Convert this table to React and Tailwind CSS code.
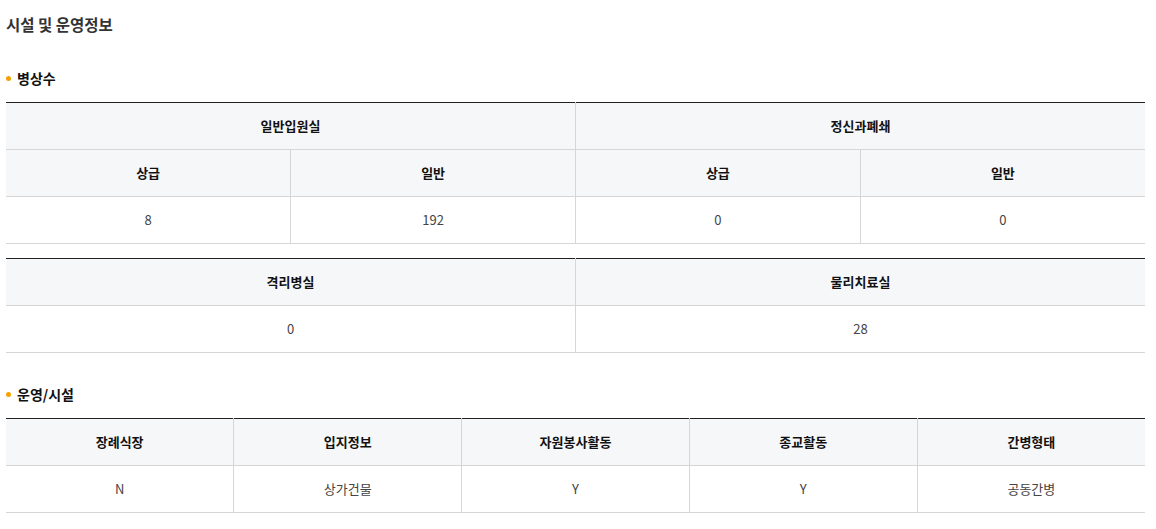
import React from "react";

const font = { fontFamily: '"Noto Sans CJK KR", "Noto Sans", sans-serif' };

function Th({ children, className = "", ...rest }) {
  return (
    <th
      {...rest}
      className={`h-[47px] bg-[#f6f7f9] border-b border-[#d6d6d6] border-l first:border-l-0 text-[13px] font-bold text-[#111] text-center align-middle p-0 ${className}`}
    >
      {children}
    </th>
  );
}

function Td({ children }) {
  return (
    <td className="h-[47px] border-b border-[#d6d6d6] border-l first:border-l-0 text-[13px] text-[#444] text-center align-middle p-0">
      {children}
    </td>
  );
}

function Bullet({ children }) {
  return (
    <div className="flex items-center gap-[6px] pl-[6px] text-[14px] font-bold text-[#111]">
      <span className="w-[5px] h-[5px] rounded-full bg-[#f5a100]" />
      <span>{children}</span>
    </div>
  );
}

export default function App() {
  return (
    <div style={font} className="bg-white w-[1156px] h-[529px] overflow-hidden">
      <div className="pl-[6px] pr-[11px]">
        <h2 className="pt-[12px] text-[15.5px] font-bold text-[#333] leading-[24px]">시설 및 운영정보</h2>
        <div className="mt-[32px] -ml-[6px]">
          <Bullet>병상수</Bullet>
        </div>
        <table className="mt-[13px] w-full table-fixed border-collapse border-t border-t-[#222]">
          <thead>
            <tr>
              <Th colSpan={2}>일반입원실</Th>
              <Th colSpan={2}>정신과폐쇄</Th>
            </tr>
            <tr>
              <Th>상급</Th>
              <Th>일반</Th>
              <Th>상급</Th>
              <Th>일반</Th>
            </tr>
          </thead>
          <tbody>
            <tr>
              <Td>8</Td>
              <Td>192</Td>
              <Td>0</Td>
              <Td>0</Td>
            </tr>
          </tbody>
        </table>
        <table className="mt-[14px] w-full table-fixed border-collapse border-t border-t-[#222]">
          <thead>
            <tr>
              <Th>격리병실</Th>
              <Th>물리치료실</Th>
            </tr>
          </thead>
          <tbody>
            <tr>
              <Td>0</Td>
              <Td>28</Td>
            </tr>
          </tbody>
        </table>
        <div className="mt-[31px] -ml-[6px]">
          <Bullet>운영/시설</Bullet>
        </div>
        <table className="mt-[13px] w-full table-fixed border-collapse border-t border-t-[#222]">
          <thead>
            <tr>
              <Th>장례식장</Th>
              <Th>입지정보</Th>
              <Th>자원봉사활동</Th>
              <Th>종교활동</Th>
              <Th>간병형태</Th>
            </tr>
          </thead>
          <tbody>
            <tr>
              <Td>N</Td>
              <Td>상가건물</Td>
              <Td>Y</Td>
              <Td>Y</Td>
              <Td>공동간병</Td>
            </tr>
          </tbody>
        </table>
      </div>
    </div>
  );
}
